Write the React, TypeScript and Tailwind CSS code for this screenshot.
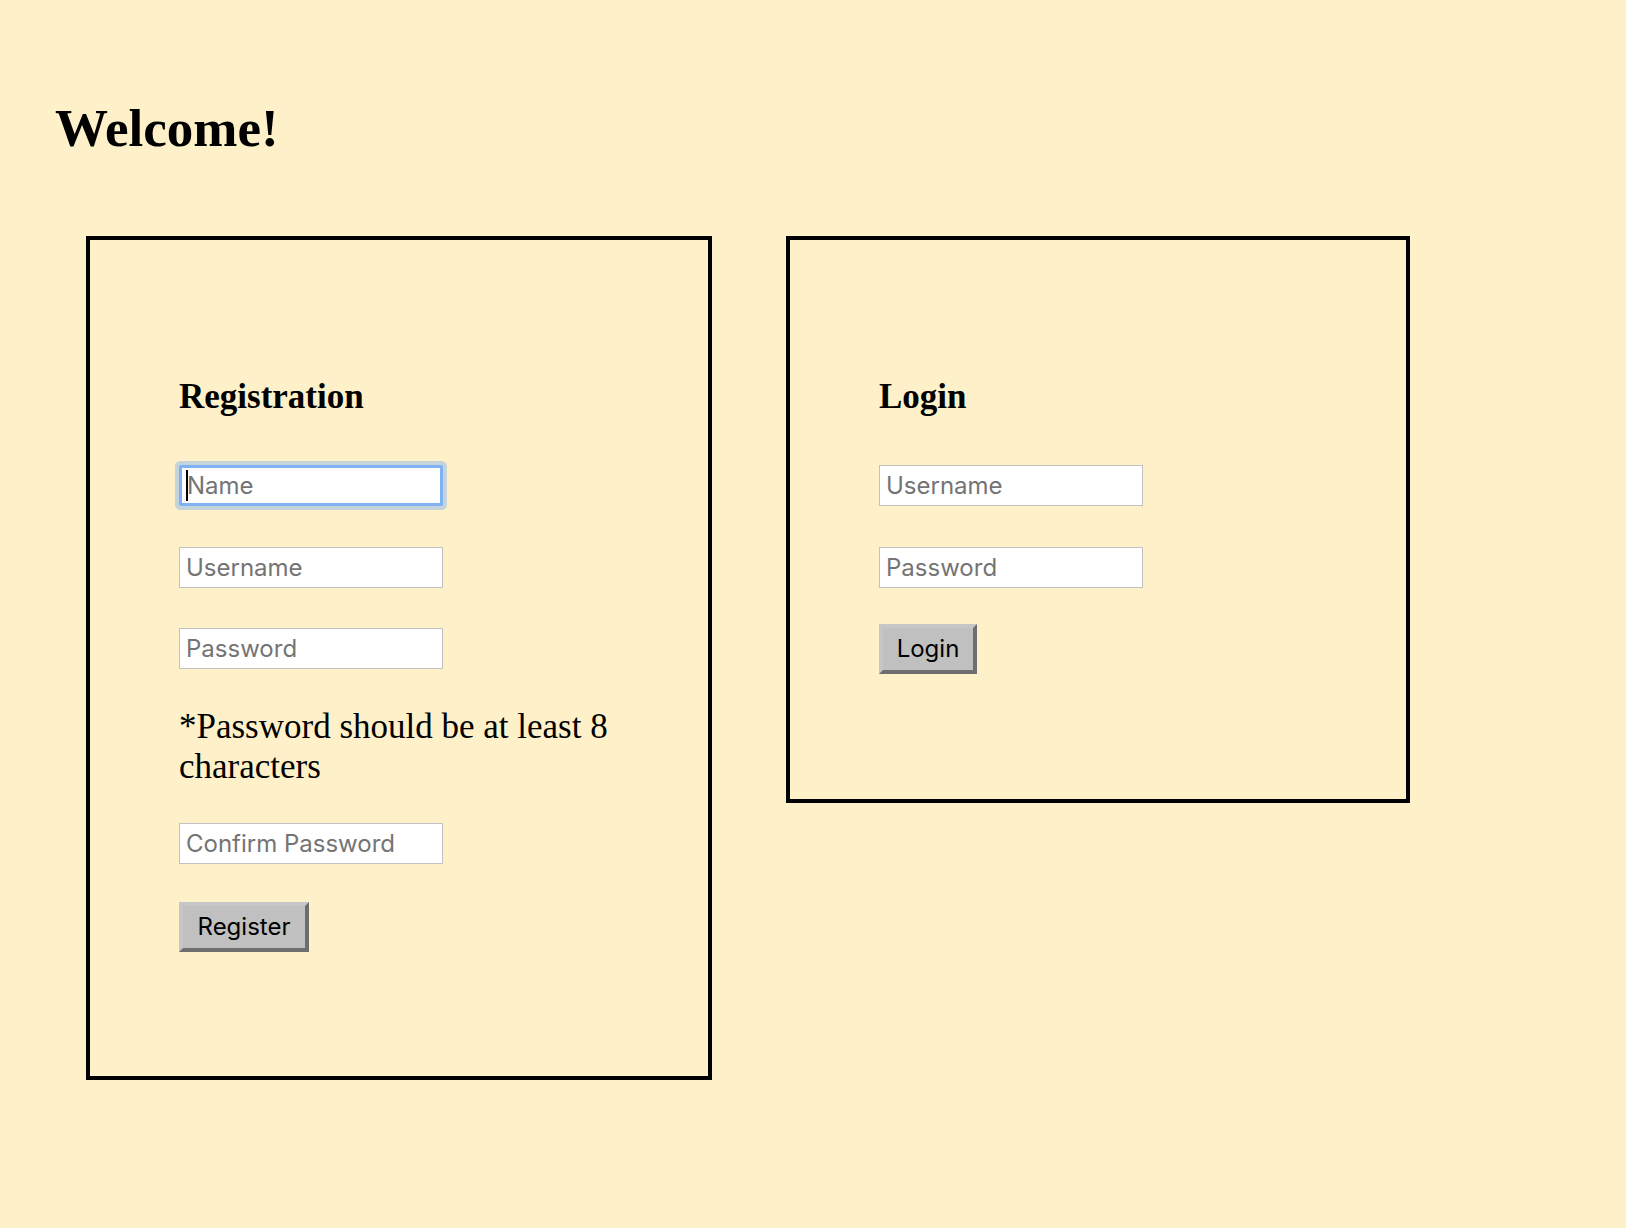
import React from "react";

const serif = { fontFamily: '"Liberation Serif", "Times New Roman", serif' };
const sans = { fontFamily: 'Inter, "Liberation Sans", Arial, sans-serif' };

function Field({ placeholder, focused = false, className = "" }: { placeholder: string; focused?: boolean; className?: string }) {
  return (
    <div className={"relative w-[264px] h-[41px] " + className}>
      <input
        type="text"
        placeholder={placeholder}
        readOnly
        style={sans}
        className={
          "block w-full h-full box-border bg-white text-[24px] text-black placeholder:text-[#747474] outline-none " +
          (focused
            ? "border-[3px] border-[#80b1f3] pl-[5px] shadow-[0_0_0_4px_rgba(140,182,235,0.5)] rounded-[2px]"
            : "border border-[#c2c2c2] pl-[6px]")
        }
      />
      {focused && <span className="absolute left-[7px] top-[5px] w-[2px] h-[31px] bg-black" />}
    </div>
  );
}

function Btn({ label, w, className = "" }: { label: string; w: string; className?: string }) {
  return (
    <button
      style={sans}
      className={
        "box-border h-[50px] bg-[#c0c0c0] text-[24px] text-black leading-none border-[4px] border-t-[#c6c6c6] border-l-[#c6c6c6] border-r-[#6e6e6e] border-b-[#6e6e6e] " +
        w +
        " " +
        className
      }
    >
      {label}
    </button>
  );
}

export default function App() {
  return (
    <div className="min-h-screen w-full bg-[#fef0c8] text-black" style={serif}>
      <h1 className="pt-[98px] pl-[55px] text-[53px] leading-[60px] font-bold" style={serif}>
        Welcome!
      </h1>
      <div className="mt-[78px] pl-[86px] flex items-start gap-[74px]">
        <div className="w-[626px] box-border border-[4px] border-black pt-[137px] pb-[124px] px-[89px]">
          <h2 className="text-[35px] leading-[40px] font-bold" style={serif}>Registration</h2>
          <Field placeholder="Name" focused className="mt-[48px]" />
          <Field placeholder="Username" className="mt-[41px]" />
          <Field placeholder="Password" className="mt-[40px]" />
          <p className="mt-[38px] text-[35px] leading-[40px]" style={serif}>
            *Password should be at least 8 characters
          </p>
          <Field placeholder="Confirm Password" className="mt-[36px]" />
          <Btn label="Register" w="w-[130px]" className="block mt-[38px]" />
        </div>
        <div className="w-[624px] box-border border-[4px] border-black pt-[137px] pb-[125px] px-[89px]">
          <h2 className="text-[35px] leading-[40px] font-bold" style={serif}>Login</h2>
          <Field placeholder="Username" className="mt-[48px]" />
          <Field placeholder="Password" className="mt-[41px]" />
          <Btn label="Login" w="w-[98px]" className="block mt-[36px]" />
        </div>
      </div>
    </div>
  );
}
